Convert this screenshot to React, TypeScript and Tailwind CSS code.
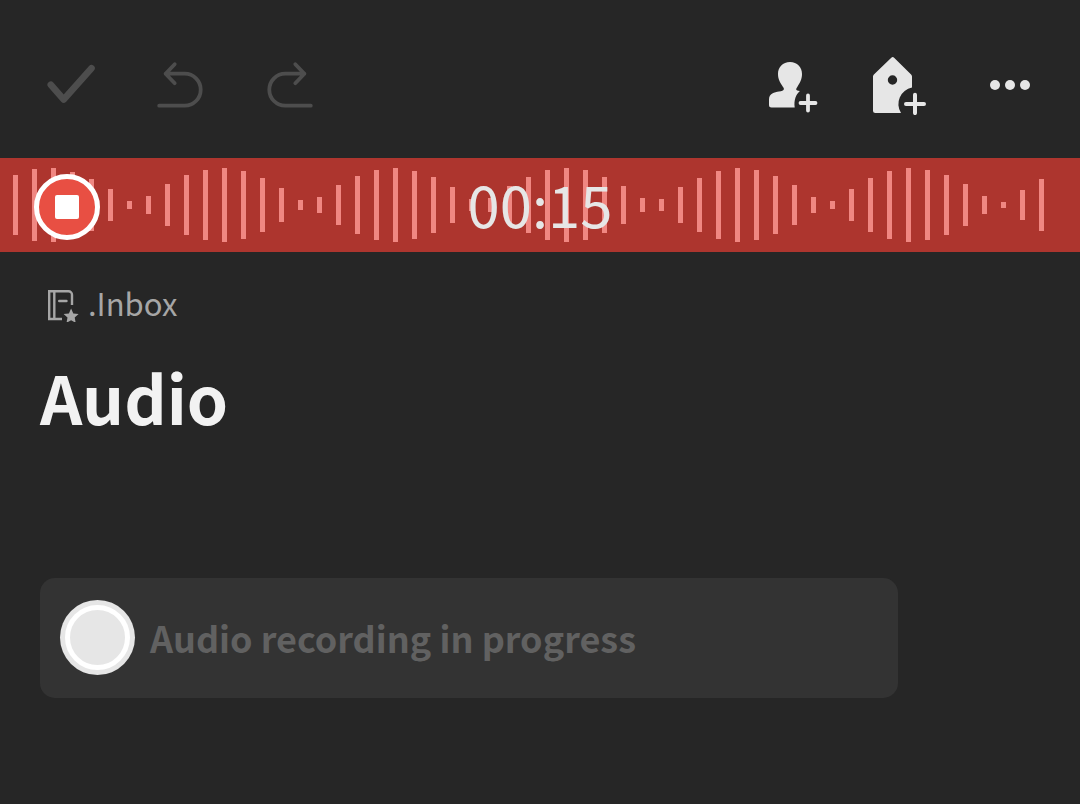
import type { ReactNode } from 'react';

// Bar heights of the recorded wave, left to right
const levels = [
  60, 72, 74, 66, 52, 32, 8, 18, 42, 60, 70, 74, 68, 54, 34, 10, 16, 40, 58, 70,
  74, 68, 56, 36, 12, 14, 38, 56, 70, 74, 70, 56, 38, 14, 12, 36, 54, 68, 74, 70,
  58, 40, 16, 8, 32, 54, 68, 74, 70, 60, 42, 18, 6, 30, 52,
];

interface ToolButtonProps {
  label: string;
  disabled?: boolean;
  children: ReactNode;
}

function ToolButton({ label, disabled, children }: ToolButtonProps) {
  return (
    <button
      type="button"
      aria-label={label}
      disabled={disabled}
      className="size-[60px] shrink-0 text-[#e6e6e6] disabled:text-[#4d4d4d]"
    >
      <svg viewBox="0 0 60 60" className="size-full" fill="none" strokeLinecap="round" strokeLinejoin="round">
        {children}
      </svg>
    </button>
  );
}

function Toolbar() {
  return (
    <header className="flex justify-between px-10 pt-[55px] pb-[43px]">
      <div className="flex gap-[50px]">
        <ToolButton label="Done" disabled>
          <path d="M10.8 29.8 23.7 44.5 51.5 13.2" stroke="currentColor" strokeWidth="6.6" />
        </ToolButton>
        <ToolButton label="Undo" disabled>
          <path d="M24.7 9.2 15.6 18.7l9.1 9.5M15.6 18.7h19.1a16 16 0 0 1 0 32H9.2" stroke="currentColor" strokeWidth="3.8" />
        </ToolButton>
        <ToolButton label="Redo" disabled>
          <path d="M35.3 9.2l9.1 9.5-9.1 9.5M44.4 18.7H25.3a16 16 0 0 0 0 32h25.5" stroke="currentColor" strokeWidth="3.8" />
        </ToolButton>
      </div>
      <div className="flex gap-[50px]">
        <ToolButton label="Add person">
          <path
            d="M30 7c7.2 0 12 5 12 12 0 5.5-2.3 9-4.3 12.200-.8 1.300-1.500 2.300-1.500 3.200 0 .9 1.500 1.300 3.700 1.600-4 3.400-6.200 9.300-5.200 16.500H11.500A2.500 2.500 0 0 1 9 50v-5.500c0-6 5.500-7.300 10-8 2.500-.4 4.900-1.200 4.900-2.600 0-1-.7-1.700-1.500-3C20.300 27.800 18 24.500 18 19c0-7 4.800-12 12-12Z"
            fill="currentColor"
          />
          <path d="M48 40.5v15M40.5 48h15" stroke="currentColor" strokeWidth="3.8" />
        </ToolButton>
        <ToolButton label="Add tag">
          <path
            fillRule="evenodd"
            d="M21.3 2.7a2 2 0 0 1 2.8 0l17 16.700a3 3 0 0 1 .9 2.100v11.100A16.700 16.700 0 0 0 31 58H5.500A2.500 2.500 0 0 1 3 55.500v-34a3 3 0 0 1 .9-2.100ZM22.500 20.300a4.700 4.700 0 1 0 0 9.400 4.700 4.700 0 0 0 0-9.400Z"
            fill="currentColor"
          />
          <path d="M45 39.7v18.400M36 49h18" stroke="currentColor" strokeWidth="4" />
        </ToolButton>
        <ToolButton label="More">
          <g fill="currentColor">
            <circle cx="15" cy="30" r="5" />
            <circle cx="30" cy="30" r="5" />
            <circle cx="45" cy="30" r="5" />
          </g>
        </ToolButton>
      </div>
    </header>
  );
}

function Recorder() {
  return (
    <section className="relative h-[94px] overflow-hidden bg-[#ad352e]">
      <svg className="absolute inset-0 h-full w-full" fill="#f08782" shapeRendering="crispEdges" aria-hidden="true">
        {levels.map((level, i) => (
          <rect key={i} x={13 + i * 19} y={47 - level / 2} width="5" height={level} />
        ))}
      </svg>
      <div className="relative grid grid-cols-[1fr_auto_1fr] items-start px-[34px]">
        <button
          type="button"
          aria-label="Stop recording"
          className="mt-4 flex size-[66px] items-center justify-center rounded-full border-[5px] border-white bg-[#e84f43]"
        >
          <span className="size-6 rounded-xs bg-white" />
        </button>
        <time className="text-[58px] leading-[90px] text-[#e6e6e6]">00:15</time>
      </div>
    </section>
  );
}

export default function App() {
  return (
    <div className="min-h-screen bg-[#262626] font-['Noto_Sans_CJK_SC',sans-serif]">
      <Toolbar />
      <Recorder />
      <main className="px-10 pt-8">
        <a href="#inbox" className="flex w-fit items-start gap-2 pl-2 text-[31px] leading-[38px] text-[#a6a6a6]">
          <svg viewBox="0 0 32 32" className="mt-1.5 size-8" fill="none" stroke="currentColor" strokeWidth="2.4" aria-hidden="true">
            <path d="M14 29H1.200V1.200h19.300a3.500 3.500 0 0 1 3.500 3.500V15M6.300 1v28" />
            <path d="M11.200 11h7.300" strokeLinecap="round" />
            <path
              d="m23.100 18.500 2.200 4.900 5.300.6-3.900 3.600 1 5.200-4.600-2.500-4.600 2.500 1-5.200-3.900-3.600 5.300-.6Z"
              fill="currentColor"
              stroke="none"
            />
          </svg>
          .Inbox
        </a>
        <h1 className="mt-[30px] text-[66px] leading-[88px] font-bold text-[#f2f2f2]">Audio</h1>
        <div className="mt-[138px] mr-[142px] flex h-[120px] items-center gap-[15px] rounded-[15px] bg-[#333333] px-5 pb-[2px]">
          <div className="flex size-[75px] shrink-0 items-center justify-center rounded-full bg-[#e6e6e6]">
            <div className="size-[65px] rounded-full border-[5px] border-white" />
          </div>
          <p className="text-[36px] leading-[48px] font-bold text-[#616161]">Audio recording in progress</p>
        </div>
      </main>
    </div>
  );
}
